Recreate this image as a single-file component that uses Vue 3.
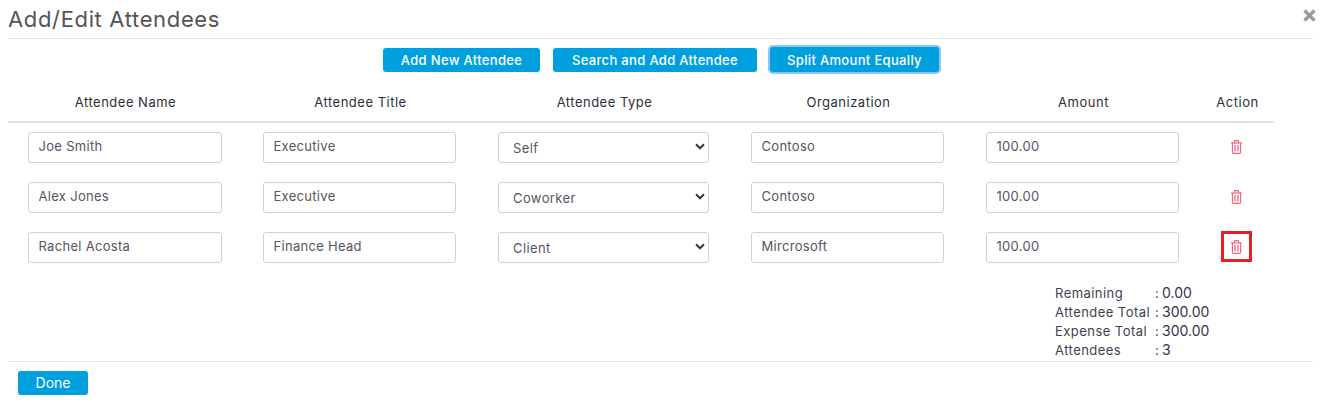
<script setup>
const rows = [
  { name: 'Joe Smith', title: 'Executive', type: 'Self', org: 'Contoso', amount: '100.00' },
  { name: 'Alex Jones', title: 'Executive', type: 'Coworker', org: 'Contoso', amount: '100.00' },
  { name: 'Rachel Acosta', title: 'Finance Head', type: 'Client', org: 'Mircrosoft', amount: '100.00', marked: true },
]
const heads = ['Attendee Name', 'Attendee Title', 'Attendee Type', 'Organization', 'Amount', 'Action']
const types = ['Self', 'Coworker', 'Client']
const totals = [
  ['Remaining', '0.00'],
  ['Attendee Total', '300.00'],
  ['Expense Total', '300.00'],
  ['Attendees', '3'],
]
</script>

<template>
  <div class="modal">
    <header class="top">
      <h1>Add/Edit Attendees</h1>
      <svg class="close" viewBox="0 0 13 13" width="13" height="13" aria-label="Close">
        <path d="M1.5 1.5 L11.5 11.5 M11.5 1.5 L1.5 11.5" stroke="#9a9a9a" stroke-width="3.2" fill="none" />
      </svg>
    </header>

    <div class="actions">
      <button class="btn">Add New Attendee</button>
      <button class="btn">Search and Add Attendee</button>
      <button class="btn focus">Split Amount Equally</button>
    </div>

    <div class="table">
      <div class="row head">
        <div v-for="h in heads" :key="h" class="th">{{ h }}</div>
      </div>
      <div v-for="r in rows" :key="r.name" class="row body">
        <div class="td"><input class="field" :value="r.name" /></div>
        <div class="td"><input class="field" :value="r.title" /></div>
        <div class="td">
          <div class="select-wrap">
            <select class="field select">
              <option v-for="t in types" :key="t" :selected="t === r.type">{{ t }}</option>
            </select>
            <svg class="chev" viewBox="0 0 10 7" width="10" height="7">
              <path d="M1 1.3 L5 5.3 L9 1.3" stroke="#343a40" stroke-width="2" fill="none" />
            </svg>
          </div>
        </div>
        <div class="td"><input class="field" :value="r.org" /></div>
        <div class="td"><input class="field" :value="r.amount" /></div>
        <div class="td action">
          <span class="trash" :class="{ marked: r.marked }">
            <svg viewBox="0 0 11 14" width="11" height="14">
              <g fill="none" stroke="#f0626e" stroke-width="1.1">
                <path d="M0 3 H11" />
                <path d="M3.5 3 V1.2 Q3.5 0.6 4.1 0.6 H6.9 Q7.5 0.6 7.5 1.2 V3" />
                <path d="M1.4 3 V12.2 Q1.4 13.4 2.6 13.4 H8.4 Q9.6 13.4 9.6 12.2 V3" />
                <path d="M4 5 V11.4 M7 5 V11.4" stroke="#e8457f" />
              </g>
            </svg>
          </span>
        </div>
      </div>
    </div>

    <div class="totals">
      <div v-for="t in totals" :key="t[0]" class="total">
        <span class="label">{{ t[0] }}</span>
        <span class="colon">:</span>
        <span class="value">{{ t[1] }}</span>
      </div>
    </div>

    <footer class="foot">
      <button class="btn done">Done</button>
    </footer>
  </div>
</template>

<style>
html, body { margin: 0; background: #fff; }
</style>

<style scoped>
.modal {
  width: 1323px;
  height: 406px;
  box-sizing: border-box;
  padding: 0 10px 0 8px;
  font-family: Inter, "Liberation Sans", sans-serif;
  color: #3f4254;
  overflow: hidden;
}
.top {
  height: 38px;
  border-bottom: 1px solid #e2e2ea;
  display: flex;
  justify-content: space-between;
  align-items: flex-start;
}
h1 {
  margin: 0;
  padding-top: 5px;
  font-size: 22px;
  line-height: 28px;
  font-weight: 400;
  letter-spacing: 0.65px;
  color: #545454;
}
.close { margin: 9px -3px 0 0; }
.actions {
  display: flex;
  justify-content: center;
  align-items: flex-start;
  gap: 13px;
  padding: 9px 0 0 0;
  margin-left: 1px;
}
.btn {
  height: 24px;
  padding: 0;
  border: 0;
  border-radius: 3px;
  background: #009fdd;
  color: #fff;
  font: 500 13px/24px Inter, "Liberation Sans", sans-serif;
  letter-spacing: 0.33px;
  width: 157px;
}
.btn:nth-child(2) { width: 204px; }
.btn.focus {
  width: 169px;
  height: 25px;
  margin-top: -1px;
  box-shadow: 0 0 0 2px #8dc6f5;
}
.table { width: 1266px; margin-top: 17px; }
.row {
  display: grid;
  grid-template-columns: 235px 235px 253px 235px 235px 73px;
}
.head {
  height: 30px;
  padding-top: 2px;
  border-bottom: 2px solid #dfe1e6;
  align-items: start;
}
.th {
  text-align: center;
  font-size: 13px;
  line-height: 22px;
  letter-spacing: 0.5px;
  color: #2e2e38;
}
.body { height: 50px; align-items: start; }
.head + .body { padding-top: 9px; }
.td { padding: 0 22px 0 20px; box-sizing: border-box; }
.td:first-child { padding-right: 21px; }
.field {
  display: block;
  width: 100%;
  height: 31px;
  box-sizing: border-box;
  border: 1px solid #cdd2dc;
  border-radius: 3px;
  background: #fff;
  padding: 0 9.5px 3px;
  font: 400 13px Inter, "Liberation Sans", sans-serif;
  letter-spacing: 0.3px;
  color: #55555f;
  outline: 0;
}
.select-wrap { position: relative; }
.select {
  appearance: none;
  padding: 0 14px;
  letter-spacing: 0.4px;
}
.chev { position: absolute; right: 4px; top: 11px; }
.action {
  padding: 0;
  display: flex;
  justify-content: center;
}
.trash {
  width: 31px;
  height: 31px;
  margin: -1px 0 0 -2px;
  box-sizing: border-box;
  display: flex;
  align-items: center;
  justify-content: center;
}
.trash.marked { border: 3px solid #ed1c24; }
.totals {
  margin: 2px 0 0 1047px;
  height: 77px;
}
.total {
  display: flex;
  height: 19px;
  font-size: 13px;
  line-height: 19px;
}
.label { width: 100px; letter-spacing: 0.45px; white-space: nowrap; color: #3f3f4f; }
.colon { width: 7px; }
.value { font-size: 14px; line-height: 17px; color: #33334a; }
.foot {
  border-top: 1px solid #e2e2e2;
  padding: 9px 0 0 10px;
}
.done { width: 70px; font-weight: 400; font-size: 14px; letter-spacing: 0; }
</style>
